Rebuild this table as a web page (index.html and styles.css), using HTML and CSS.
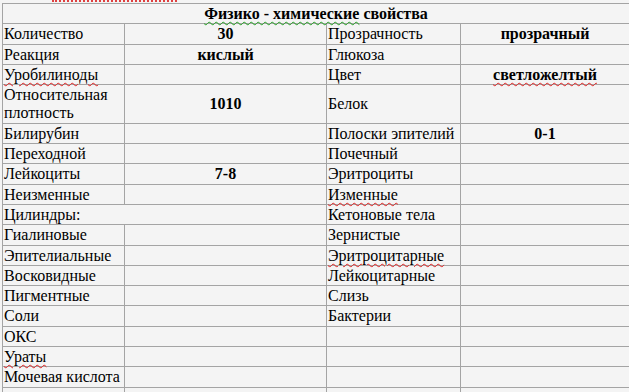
FILE: index.html
```html
<!DOCTYPE html>
<html lang="ru">
<head>
<meta charset="utf-8">
<link rel="stylesheet" href="styles.css">
</head>
<body>
<div class="squiggle"></div>
<table class="props">
<colgroup><col class="c1"><col class="c2"><col class="c3"><col class="c4"></colgroup>
<tr><td colspan="4" class="val"><span class="grammar">Физико - химические</span> свойства</td></tr>
<tr><td>Количество</td><td class="val">30</td><td>Прозрачность</td><td class="val">прозрачный</td></tr>
<tr><td>Реакция</td><td class="val">кислый</td><td>Глюкоза</td><td></td></tr>
<tr><td><span class="spell">Уробилиноды</span></td><td></td><td>Цвет</td><td class="val"><span class="spell">светложелтый</span></td></tr>
<tr><td>Относительная плотность</td><td class="val">1010</td><td>Белок</td><td></td></tr>
<tr><td>Билирубин</td><td></td><td>Полоски эпителий</td><td class="val">0-1</td></tr>
<tr><td>Переходной</td><td></td><td>Почечный</td><td></td></tr>
<tr><td>Лейкоциты</td><td class="val">7-8</td><td>Эритроциты</td><td></td></tr>
<tr><td>Неизменные</td><td></td><td><span class="spell">Изменные</span></td><td></td></tr>
<tr><td colspan="2">Цилиндры:</td><td>Кетоновые тела</td><td></td></tr>
<tr><td>Гиалиновые</td><td></td><td>Зернистые</td><td></td></tr>
<tr><td>Эпителиальные</td><td></td><td><span class="spell">Эритроцитарные</span></td><td></td></tr>
<tr><td>Восковидные</td><td></td><td>Лейкоцитарные</td><td></td></tr>
<tr><td>Пигментные</td><td></td><td>Слизь</td><td></td></tr>
<tr><td>Соли</td><td></td><td>Бактерии</td><td></td></tr>
<tr><td>ОКС</td><td></td><td></td><td></td></tr>
<tr><td><span class="spell">Ураты</span></td><td></td><td></td><td></td></tr>
<tr><td>Мочевая кислота</td><td></td><td></td><td></td></tr>
<tr><td>&nbsp;</td><td></td><td></td><td></td></tr>
</table>
</body>
</html>
```
FILE: styles.css
```css
html, body {
  margin: 0;
  padding: 0;
  background: #f4f4f4;
  overflow: hidden;
}
body {
  padding-left: 2px;
  font-family: "Liberation Serif", "Times New Roman", serif;
  font-size: 16px;
  color: #000;
}
.squiggle {
  width: 125px;
  height: 0;
  margin-left: 50px;
  border-top: 2px dotted #e04040;
  margin-bottom: 1px;
}
.props {
  border-collapse: collapse;
  table-layout: fixed;
  width: 627px;
  background: #f4f4f4;
  font-family: "Liberation Serif", "Times New Roman", serif;
}
.c1 { width: 122px; }
.c2 { width: 202px; }
.c3 { width: 134px; }
.c4 { width: 169px; }
.props td {
  border: 1px solid #a4a4a4;
  padding: 1px 1px 0;
  line-height: 18.3px;
  vertical-align: middle;
  white-space: normal;
}
.props td.val {
  font-weight: bold;
  text-align: center;
}
.spell {
  text-decoration: underline wavy #e02020;
  text-decoration-thickness: 1px;
  text-underline-offset: 2px;
}
.grammar {
  text-decoration: underline wavy #20a020;
  text-decoration-thickness: 1px;
  text-underline-offset: 2px;
}
```
